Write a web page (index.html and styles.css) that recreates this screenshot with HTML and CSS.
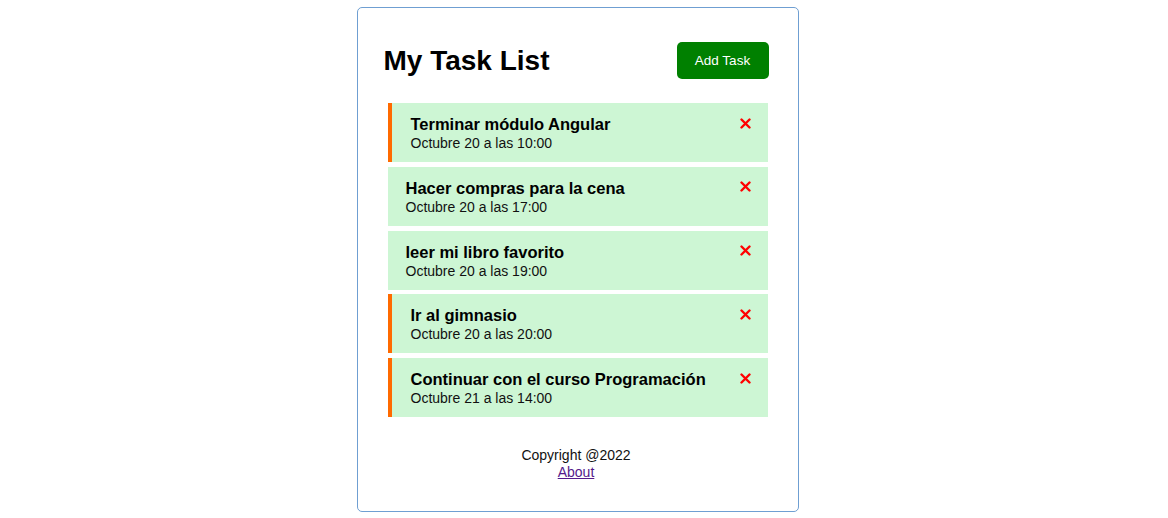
FILE: index.html
```html
<!DOCTYPE html>
<html lang="es">
<head>
<meta charset="utf-8">
<title>Task Tracker</title>
<link rel="stylesheet" href="styles.css">
</head>
<body>
<div class="container">
  <header class="header">
    <h1 class="title">My Task List</h1>
    <button class="btn">Add Task</button>
  </header>
  <div class="tasks">
    <div class="task reminder">
      <h3 class="task-title">Terminar módulo Angular
        <svg class="del" viewBox="0 0 11 11" width="11" height="11"><path d="M1.5 1.5 L9.5 9.5 M9.5 1.5 L1.5 9.5" stroke="#f00" stroke-width="2.4" stroke-linecap="round"/></svg>
      </h3>
      <p class="task-date">Octubre 20 a las 10:00</p>
    </div>
    <div class="task">
      <h3 class="task-title">Hacer compras para la cena
        <svg class="del" viewBox="0 0 11 11" width="11" height="11"><path d="M1.5 1.5 L9.5 9.5 M9.5 1.5 L1.5 9.5" stroke="#f00" stroke-width="2.4" stroke-linecap="round"/></svg>
      </h3>
      <p class="task-date">Octubre 20 a las 17:00</p>
    </div>
    <div class="task">
      <h3 class="task-title">leer mi libro favorito
        <svg class="del" viewBox="0 0 11 11" width="11" height="11"><path d="M1.5 1.5 L9.5 9.5 M9.5 1.5 L1.5 9.5" stroke="#f00" stroke-width="2.4" stroke-linecap="round"/></svg>
      </h3>
      <p class="task-date">Octubre 20 a las 19:00</p>
    </div>
    <div class="task reminder">
      <h3 class="task-title">Ir al gimnasio
        <svg class="del" viewBox="0 0 11 11" width="11" height="11"><path d="M1.5 1.5 L9.5 9.5 M9.5 1.5 L1.5 9.5" stroke="#f00" stroke-width="2.4" stroke-linecap="round"/></svg>
      </h3>
      <p class="task-date">Octubre 20 a las 20:00</p>
    </div>
    <div class="task reminder">
      <h3 class="task-title">Continuar con el curso Programación
        <svg class="del" viewBox="0 0 11 11" width="11" height="11"><path d="M1.5 1.5 L9.5 9.5 M9.5 1.5 L1.5 9.5" stroke="#f00" stroke-width="2.4" stroke-linecap="round"/></svg>
      </h3>
      <p class="task-date">Octubre 21 a las 14:00</p>
    </div>
  </div>
  <footer class="footer">
    <p class="copy">Copyright @2022</p>
    <a class="about" href="#">About</a>
  </footer>
</div>
</body>
</html>
```

FILE: styles.css
```css
* { box-sizing: border-box; }
html, body { margin: 0; background: #fff; }
body {
  padding: 0 13px 0 0;
  font-family: "Liberation Sans", Arial, sans-serif;
  color: #000;
}

.container {
  width: 442px;
  margin: 7px auto 0;
  border: 1px solid #6f9fd2;
  border-radius: 5px;
  padding: 34px 29px 30px 26px;
}

.header {
  display: flex;
  align-items: center;
  justify-content: space-between;
  height: 37px;
  margin-bottom: 24px;
}
.title {
  margin: 0;
  font-size: 28px;
  font-weight: bold;
  line-height: 32px;
}
.btn {
  background: #008000;
  color: #fff;
  border: none;
  border-radius: 5px;
  width: 92px;
  height: 37px;
  font-family: "Liberation Sans", Arial, sans-serif;
  font-size: 13.5px;
  padding: 0;
}

.tasks {
  margin-left: 4px;
  margin-right: 1px;
  display: flex;
  flex-direction: column;
  gap: 4.75px;
}
.task {
  background: #cdf6d4;
  height: 59px;
  padding: 12px 17px 0 18px;
}
.task.reminder {
  border-left: 4px solid #ff6a00;
  padding-left: 19px;
}
.task-title {
  margin: 0;
  display: flex;
  align-items: center;
  justify-content: space-between;
  font-size: 16.5px;
  line-height: 18px;
  font-weight: bold;
}
.del { display: block; flex: none; margin-top: -2px; }
.task-date {
  margin: 2px 0 0;
  font-size: 14px;
  line-height: 16px;
  color: #111;
}

.footer {
  margin-top: 30px;
  text-align: center;
  font-size: 14px;
  line-height: 17px;
}
.copy { margin: 0; color: #111; }
.about { color: #551a8b; text-decoration: underline; }
```
